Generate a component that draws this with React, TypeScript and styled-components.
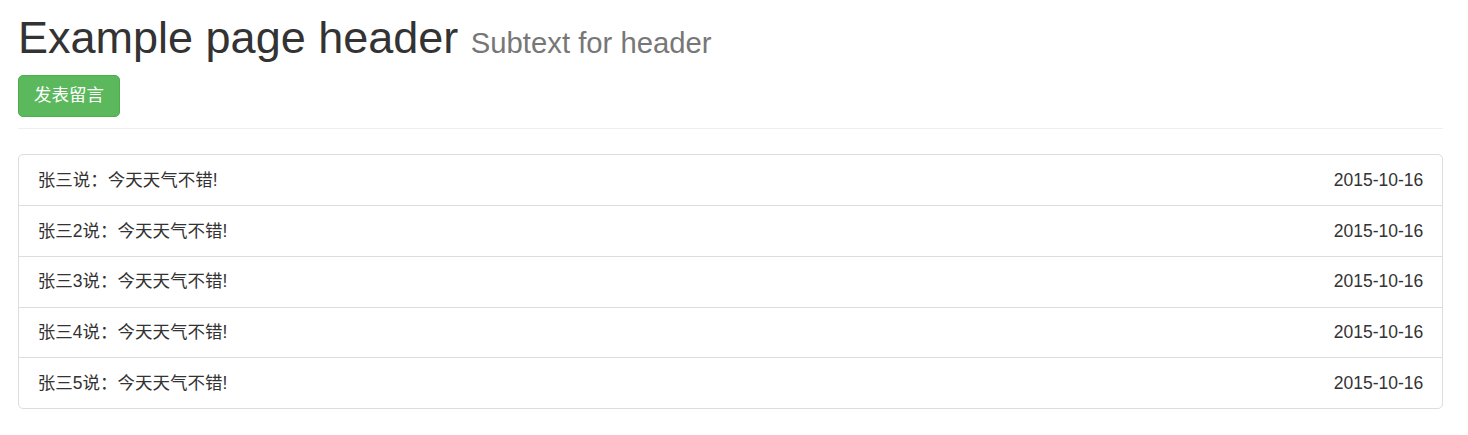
import React from "react";
import styled, { createGlobalStyle } from "styled-components";

const GlobalStyle = createGlobalStyle`
  html, body {
    margin: 0;
    padding: 0;
    background: #fff;
  }
  body {
    font-family: "Liberation Sans", Arial, "Noto Sans CJK SC", sans-serif;
    font-size: 17.5px;
    line-height: 1.42857;
    color: #333;
  }
  * { box-sizing: border-box; }
`;

const Page = styled.div`
  padding: 0 25px 0 18px;
`;

const PageHeader = styled.div`
  padding-bottom: 11.25px;
  margin-bottom: 25px;
  border-bottom: 1.25px solid #eee;
`;

const Title = styled.h1`
  margin: 13px 0 12px;
  font-family: "Liberation Sans", Arial, sans-serif;
  font-size: 45px;
  font-weight: 500;
  line-height: 1.1;
  color: #333;
`;

const Sub = styled.small`
  font-size: 65%;
  font-weight: 400;
  line-height: 1;
  color: #777;
`;

const Button = styled.button`
  display: inline-block;
  height: 42.5px;
  padding: 7.5px 15px;
  font-family: "Liberation Sans", Arial, "Noto Sans CJK SC", sans-serif;
  font-size: 17.5px;
  line-height: 25px;
  color: #fff;
  background: #5cb85c;
  border: 1.25px solid #4cae4c;
  border-radius: 5px;
  cursor: pointer;
`;

const List = styled.ul`
  margin: 0 0 25px;
  padding: 0;
  list-style: none;
`;

const Item = styled.li`
  display: flex;
  justify-content: space-between;
  align-items: center;
  padding: 12.5px 18.75px;
  line-height: 25px;
  background: #fff;
  border: 1.25px solid #ddd;
  margin-bottom: -1.25px;
  &:first-child {
    border-top-left-radius: 5px;
    border-top-right-radius: 5px;
  }
  &:last-child {
    margin-bottom: 0;
    border-bottom-left-radius: 5px;
    border-bottom-right-radius: 5px;
  }
`;

const DateText = styled.span`
  color: #333;
`;

const messages = [
  { name: "张三", date: "2015-10-16" },
  { name: "张三2", date: "2015-10-16" },
  { name: "张三3", date: "2015-10-16" },
  { name: "张三4", date: "2015-10-16" },
  { name: "张三5", date: "2015-10-16" },
];

export default function App() {
  return (
    <>
      <GlobalStyle />
      <Page>
        <PageHeader>
          <Title>
            Example page header <Sub>Subtext for header</Sub>
          </Title>
          <Button type="button">发表留言</Button>
        </PageHeader>
        <List>
          {messages.map((m, i) => (
            <Item key={i}>
              <span>{m.name}说：今天天气不错!</span>
              <DateText>{m.date}</DateText>
            </Item>
          ))}
        </List>
      </Page>
    </>
  );
}
